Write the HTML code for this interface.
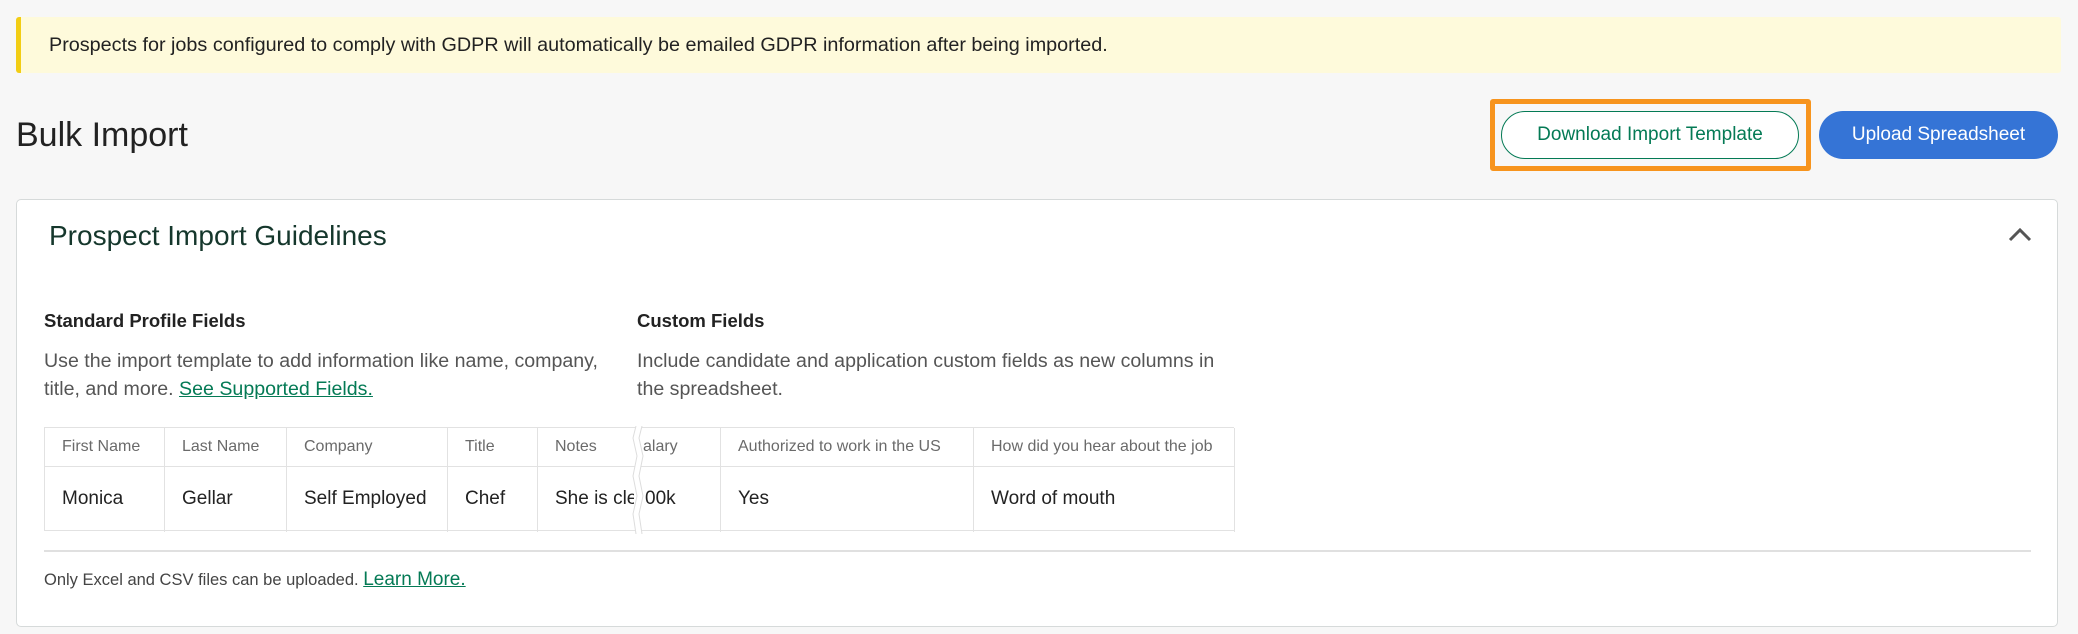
<!DOCTYPE html>
<html><head><meta charset="utf-8"><style>
*{box-sizing:border-box;margin:0;padding:0}
body{width:2078px;height:634px;background:#f7f7f7;font-family:"Liberation Sans",sans-serif;position:relative;overflow:hidden;color:#222}
.a{position:absolute;white-space:nowrap}
.banner{left:16px;top:17px;width:2045px;height:56px;background:#fefadb;border-left:5px solid #f2cd14;border-radius:3px}
.btn{border-radius:24px;display:flex;align-items:center;justify-content:center;font-size:19px}
.card{left:16px;top:199px;width:2042px;height:428px;background:#fff;border:1px solid #d6dada;border-radius:5px}
.cell{position:absolute;border-right:1px solid #e2e2e2;overflow:hidden;white-space:nowrap;display:flex;align-items:center}
.h{top:0;height:38px;font-size:16px;color:#6a6a6a;padding-left:17px}
.b{top:38px;height:66px;font-size:19px;color:#222;padding-left:17px}
.lk{color:#047a55;text-decoration:underline}
</style></head><body>
<div class="a banner"></div>
<div class="a" style="left:49px;top:33px;font-size:19.8px;line-height:24px;color:#222">Prospects for jobs configured to comply with GDPR will automatically be emailed GDPR information after being imported.</div>
<div class="a" style="left:16px;top:115px;font-size:34px;line-height:40px;color:#222">Bulk Import</div>
<div class="a" style="left:1490px;top:99px;width:321px;height:72px;border:5px solid #f7941d;border-radius:3px"></div>
<div class="a btn" style="left:1501px;top:111px;width:298px;height:48px;border:1.5px solid #047a55;background:#fff;color:#047a55">Download Import Template</div>
<div class="a btn" style="left:1819px;top:111px;width:239px;height:48px;background:#3574d6;color:#fff">Upload Spreadsheet</div>
<div class="a card"></div>
<div class="a" style="left:49px;top:220px;font-size:28px;line-height:32px;color:#15372c">Prospect Import Guidelines</div>
<svg class="a" style="left:2007px;top:226px" width="26" height="18" viewBox="0 0 26 18"><path d="M3 14 L13 4 L23 14" fill="none" stroke="#555" stroke-width="3"/></svg>
<div class="a" style="left:44px;top:310px;font-size:18.5px;font-weight:bold;color:#222">Standard Profile Fields</div>
<div class="a" style="left:637px;top:310px;font-size:18.5px;font-weight:bold;color:#222">Custom Fields</div>
<div class="a" style="left:44px;top:347px;font-size:19.6px;line-height:28px;color:#555">Use the import template to add information like name, company,<br>title, and more. <span class="lk">See Supported Fields.</span></div>
<div class="a" style="left:637px;top:347px;font-size:19.6px;line-height:28px;color:#555">Include candidate and application custom fields as new columns in<br>the spreadsheet.</div>
<div class="a" style="left:44px;top:427px;width:1190px;height:104px;border:1px solid #e2e2e2;border-right:none">
<div style="position:absolute;left:0;top:38px;width:100%;height:1px;background:#e2e2e2"></div>
<div class="cell h" style="left:0;width:120px">First Name</div>
<div class="cell h" style="left:120px;width:122px">Last Name</div>
<div class="cell h" style="left:242px;width:161px">Company</div>
<div class="cell h" style="left:403px;width:90px">Title</div>
<div class="cell h" style="left:493px;width:96px;border-right:none">Notes</div>
<div class="cell h" style="left:598px;width:78px;padding-left:0">alary</div>
<div class="cell h" style="left:676px;width:253px">Authorized to work in the US</div>
<div class="cell h" style="left:929px;width:261px">How did you hear about the job</div>
<div class="cell b" style="left:0;width:120px">Monica</div>
<div class="cell b" style="left:120px;width:122px">Gellar</div>
<div class="cell b" style="left:242px;width:161px">Self Employed</div>
<div class="cell b" style="left:403px;width:90px">Chef</div>
<div class="cell b" style="left:493px;width:96px;border-right:none">She is cle</div>
<div class="cell b" style="left:598px;width:78px;padding-left:2px">00k</div>
<div class="cell b" style="left:676px;width:253px">Yes</div>
<div class="cell b" style="left:929px;width:261px">Word of mouth</div>
<svg style="position:absolute;left:586px;top:-2px" width="16" height="108" viewBox="0 0 16 108"><path d="M5 0 L2 12 L6 30 L2 50 L6 70 L2 88 L5 108 L11 108 L8 88 L12 70 L8 50 L12 30 L8 12 L11 0Z" fill="#fff"/><path d="M5 0 L2 12 L6 30 L2 50 L6 70 L2 88 L5 108 M11 0 L8 12 L12 30 L8 50 L12 70 L8 88 L11 108" fill="none" stroke="#ddd" stroke-width="1"/></svg>
</div>
<div class="a" style="left:44px;top:550px;width:1987px;height:2px;background:#e0e0e0"></div>
<div class="a" style="left:44px;top:569px;font-size:16.5px;color:#444">Only Excel and CSV files can be uploaded. <span class="lk" style="font-size:19px">Learn More.</span></div>
</body></html>
